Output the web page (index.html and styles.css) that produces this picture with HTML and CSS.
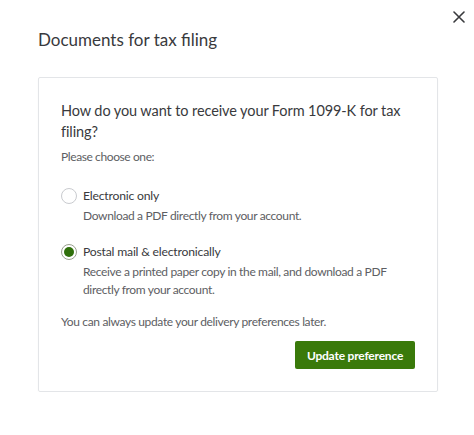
FILE: index.html
```html
<!DOCTYPE html>
<html>
<head>
<meta charset="utf-8">
<link rel="stylesheet" href="styles.css">
</head>
<body>
<div class="modal">
  <button class="close" aria-label="Close">
    <svg width="12" height="12" viewBox="0 0 12 12"><path d="M1 1 L11 11 M11 1 L1 11" stroke="#393a3d" stroke-width="1.6" fill="none" stroke-linecap="round"/></svg>
  </button>
  <h1 class="title">Documents for tax filing</h1>
  <div class="card">
    <p class="question">How do you want to receive your Form 1099-K for tax filing?</p>
    <p class="hint">Please choose one:</p>
    <div class="option">
      <div class="option-row"><span class="radio"></span><span class="label">Electronic only</span></div>
      <p class="desc">Download a PDF directly from your account.</p>
    </div>
    <div class="option option-second">
      <div class="option-row"><span class="radio radio-checked"></span><span class="label">Postal mail &amp; electronically</span></div>
      <p class="desc">Receive a printed paper copy in the mail, and download a PDF directly from your account.</p>
    </div>
    <p class="note">You can always update your delivery preferences later.</p>
    <div class="actions"><button class="btn">Update preference</button></div>
  </div>
</div>
</body>
</html>
```
FILE: styles.css
```css
html, body { margin: 0; padding: 0; background: #fff; }
body { font-family: "Lato", "Liberation Sans", sans-serif; color: #393a3d; }
.modal { position: relative; padding: 30px 38px 0 38px; }
.close { position: absolute; top: 11px; left: 453px; width: 12px; height: 12px; padding: 0; border: 0; background: none; display: block; }
.close svg { display: block; }
.title { margin: 0; font-size: 17px; line-height: 20px; font-weight: 400; }
.card { margin-top: 27px; width: 354px; border: 1px solid #e3e5e8; border-radius: 2px; padding: 22px; box-shadow: 0 1px 2px rgba(0,0,0,0.03); }
.question { margin: 0; font-size: 14.5px; line-height: 21px; letter-spacing: -0.1px; }
.hint { margin: 6px 0 0; font-size: 12px; line-height: 18px; letter-spacing: -0.4px; color: #5d5e63; }
.option { margin-top: 20px; }
.option-second { margin-top: 17px; }
.option-row { display: flex; align-items: center; gap: 6px; height: 20px; }
.radio { width: 14px; height: 14px; border: 1px solid #c9cbcf; border-radius: 50%; display: flex; align-items: center; justify-content: center; flex: none; }
.radio-checked { border-color: #9aa08f; }
.radio-checked::after { content: ""; width: 10px; height: 10px; border-radius: 50%; background: #2f6f0a; }
.label { font-size: 12.2px; line-height: 20px; letter-spacing: -0.2px; color: #393a3d; }
.desc { margin: 1px 0 0 22px; font-size: 12px; line-height: 18px; letter-spacing: -0.35px; color: #5d5e63; }
.note { margin: 14px 0 0; font-size: 12px; line-height: 18px; letter-spacing: -0.35px; color: #5d5e63; }
.actions { display: flex; justify-content: flex-end; margin-top: 10px; }
.btn { height: 28px; width: 120px; padding: 0; border: 0; border-radius: 2px; background: #3a7a0a; color: #fff; font-family: inherit; font-size: 12px; font-weight: 700; letter-spacing: -0.2px; }
```
